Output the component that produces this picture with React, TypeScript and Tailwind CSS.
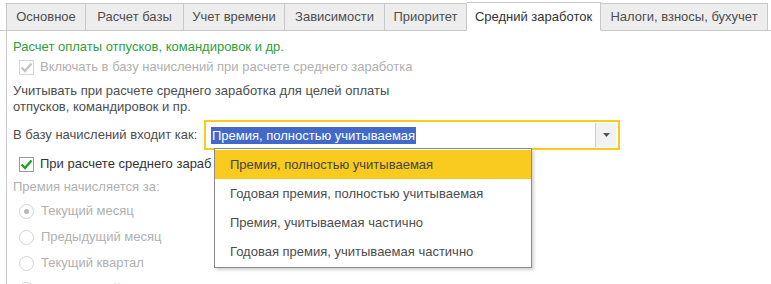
import React from 'react';

const tabs: [string, string][] = [
  ['Основное', 'w-[80px]'],
  ['Расчет базы', 'w-[98px]'],
  ['Учет времени', 'w-[101px]'],
  ['Зависимости', 'w-[100px]'],
  ['Приоритет', 'w-[82px]'],
  ['Средний заработок', 'w-[134px]'],
  ['Налоги, взносы, бухучет', 'w-[167px]'],
];

const options = [
  'Премия, полностью учитываемая',
  'Годовая премия, полностью учитываемая',
  'Премия, учитываемая частично',
  'Годовая премия, учитываемая частично',
];

function Check({ disabled }: { disabled?: boolean }) {
  return (
    <span
      className={
        'shrink-0 w-[15px] h-[15px] border flex items-center justify-center bg-white ' +
        (disabled ? 'border-[#d4d4d4]' : 'border-[#9a9a9a]')
      }
    >
      <svg width="13" height="11" viewBox="0 0 13 11">
        <path
          d="M1.5 5.5 L5 9 L11.5 1.5"
          fill="none"
          stroke={disabled ? '#c4c4c4' : '#1ea01e'}
          strokeWidth="2.4"
        />
      </svg>
    </span>
  );
}

function Radio({ label, on }: { label: string; on?: boolean }) {
  return (
    <div className="flex items-center h-[26px] gap-[7px] pl-[6px] text-[#b0b0b0]">
      <span className="w-[15px] h-[15px] rounded-full border border-[#d4d4d4] flex items-center justify-center">
        {on && <span className="w-[5px] h-[5px] rounded-full bg-[#b8b8b8]" />}
      </span>
      {label}
    </div>
  );
}

export default function App() {
  return (
    <div className="w-[771px] h-[284px] bg-white overflow-hidden relative text-[13px] text-[#4d4d4d] font-['Liberation_Sans',Arial,sans-serif]">
      <div className="flex items-end pl-[6px] pt-[2px] border-b border-[#c8c8c8] h-[31px]">
        {tabs.map(([t, w], i) => {
          const active = t === 'Средний заработок';
          return (
            <div
              key={t}
              className={
                'shrink-0 whitespace-nowrap border border-[#c8c8c8] flex items-center justify-center ' +
                w +
                (i === 0 ? '' : ' border-l-0') +
                (active
                  ? ' bg-white h-[29px] -mb-px border-b-white text-[#333]'
                  : ' bg-[#ededed] h-[28px] -mb-px')
              }
            >
              {t}
            </div>
          );
        })}
      </div>

      <div className="ml-[6px] border-l border-[#c8c8c8] h-[260px] pl-[6px] pt-[7px]">
        <div className="h-[18px] flex items-center text-[#2f9e3a]">
          Расчет оплаты отпусков, командировок и др.
        </div>
        <div className="h-[22px] flex items-center gap-[6px] pl-[6px] text-[#b0b0b0]">
          <Check disabled />
          Включать в базу начислений при расчете среднего заработка
        </div>
        <div className="mt-[5px] leading-[16px]">
          Учитывать при расчете среднего заработка для целей оплаты
          <br />
          отпусков, командировок и пр.
        </div>

        <div className="mt-[5px] flex items-center h-[30px]">
          <span className="w-[191px] whitespace-nowrap">В базу начислений входит как:</span>
          <div className="w-[416px] h-[30px] border-2 border-[#f7cd1a] flex items-center pl-[5px] pr-[2px]">
            <span className="bg-[#4169c9] text-white px-[1px] leading-[17px]">
              Премия, полностью учитываемая
            </span>
            <div className="ml-auto w-[21px] h-[24px] bg-[#f2f2f2] border-l border-[#cfcfcf] flex items-center justify-center">
              <svg width="7" height="4" viewBox="0 0 7 4">
                <path d="M0 0 H7 L3.5 4 Z" fill="#555" />
              </svg>
            </div>
          </div>
        </div>

        <div className="mt-[3px] h-[22px] flex items-center gap-[6px] pl-[6px] text-[#333]">
          <Check />
          <span className="whitespace-nowrap">При расчете среднего зараб</span>
        </div>
        <div className="mt-[3px] h-[18px] flex items-center text-[#b0b0b0]">Премия начисляется за:</div>
        <div className="mt-[2px]">
          <Radio label="Текущий месяц" on />
          <Radio label="Предыдущий месяц" />
          <Radio label="Текущий квартал" />
          <Radio label="Предыдущий квартал" />
        </div>
      </div>

      <div className="absolute left-[214px] top-[148px] w-[318px] border border-[#8a8a8a] bg-white shadow-[2px_2px_3px_rgba(0,0,0,0.18)] py-px">
        {options.map((o, i) => (
          <div
            key={o}
            className={
              'h-[29px] flex items-center pl-[15px] ' +
              (i === 0 ? 'bg-[#f9cb1f] text-[#444]' : 'text-[#4d4d4d]')
            }
          >
            {o}
          </div>
        ))}
      </div>
    </div>
  );
}
